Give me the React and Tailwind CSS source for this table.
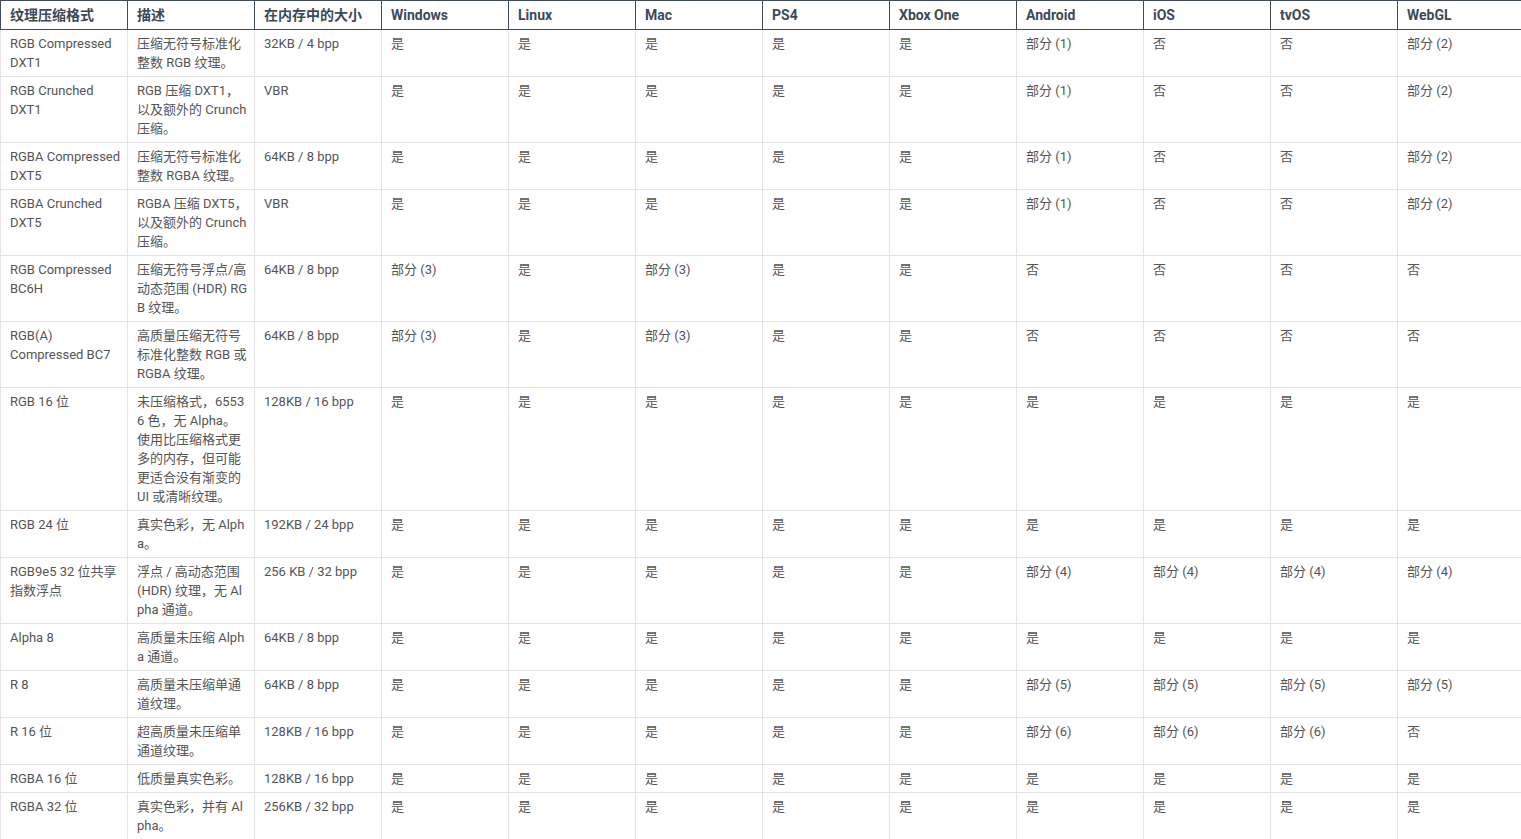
const headers = ['纹理压缩格式', '描述', '在内存中的大小', 'Windows', 'Linux', 'Mac', 'PS4', 'Xbox One', 'Android', 'iOS', 'tvOS', 'WebGL']

const Y = '是'
const N = '否'

const rows = [
  { name: 'RGB Compressed DXT1', desc: ['压缩无符号标准化', '整数 RGB 纹理。'], size: '32KB / 4 bpp', vals: [Y, Y, Y, Y, Y, '部分 (1)', N, N, '部分 (2)'] },
  { name: 'RGB Crunched DXT1', desc: ['RGB 压缩 DXT1，', '以及额外的 Crunch', '压缩。'], size: 'VBR', vals: [Y, Y, Y, Y, Y, '部分 (1)', N, N, '部分 (2)'] },
  { name: 'RGBA Compressed DXT5', desc: ['压缩无符号标准化', '整数 RGBA 纹理。'], size: '64KB / 8 bpp', vals: [Y, Y, Y, Y, Y, '部分 (1)', N, N, '部分 (2)'] },
  { name: 'RGBA Crunched DXT5', desc: ['RGBA 压缩 DXT5，', '以及额外的 Crunch', '压缩。'], size: 'VBR', vals: [Y, Y, Y, Y, Y, '部分 (1)', N, N, '部分 (2)'] },
  { name: 'RGB Compressed BC6H', desc: ['压缩无符号浮点/高', '动态范围 (HDR) RG', 'B 纹理。'], size: '64KB / 8 bpp', vals: ['部分 (3)', Y, '部分 (3)', Y, Y, N, N, N, N] },
  { name: 'RGB(A) Compressed BC7', desc: ['高质量压缩无符号', '标准化整数 RGB 或', 'RGBA 纹理。'], size: '64KB / 8 bpp', vals: ['部分 (3)', Y, '部分 (3)', Y, Y, N, N, N, N] },
  { name: 'RGB 16 位', desc: ['未压缩格式，6553', '6 色，无 Alpha。', '使用比压缩格式更', '多的内存，但可能', '更适合没有渐变的', 'UI 或清晰纹理。'], size: '128KB / 16 bpp', vals: [Y, Y, Y, Y, Y, Y, Y, Y, Y] },
  { name: 'RGB 24 位', desc: ['真实色彩，无 Alph', 'a。'], size: '192KB / 24 bpp', vals: [Y, Y, Y, Y, Y, Y, Y, Y, Y] },
  { name: 'RGB9e5 32 位共享指数浮点', desc: ['浮点 / 高动态范围', '(HDR) 纹理，无 Al', 'pha 通道。'], size: '256 KB / 32 bpp', vals: [Y, Y, Y, Y, Y, '部分 (4)', '部分 (4)', '部分 (4)', '部分 (4)'] },
  { name: 'Alpha 8', desc: ['高质量未压缩 Alph', 'a 通道。'], size: '64KB / 8 bpp', vals: [Y, Y, Y, Y, Y, Y, Y, Y, Y] },
  { name: 'R 8', desc: ['高质量未压缩单通', '道纹理。'], size: '64KB / 8 bpp', vals: [Y, Y, Y, Y, Y, '部分 (5)', '部分 (5)', '部分 (5)', '部分 (5)'] },
  { name: 'R 16 位', desc: ['超高质量未压缩单', '通道纹理。'], size: '128KB / 16 bpp', vals: [Y, Y, Y, Y, Y, '部分 (6)', '部分 (6)', '部分 (6)', N] },
  { name: 'RGBA 16 位', desc: ['低质量真实色彩。'], size: '128KB / 16 bpp', vals: [Y, Y, Y, Y, Y, Y, Y, Y, Y] },
  { name: 'RGBA 32 位', desc: ['真实色彩，并有 Al', 'pha。'], size: '256KB / 32 bpp', vals: [Y, Y, Y, Y, Y, Y, Y, Y, Y] },
]

const font = { fontFamily: 'Roboto, "Noto Sans CJK SC", sans-serif' }

export default function App() {
  return (
    <div className="h-[839px] w-[1521px] overflow-hidden bg-white" style={font}>
      <table className="table-fixed border-separate border-spacing-0 w-[1524px]">
        <colgroup>
          {headers.map((h) => <col key={h} className="w-[127px]" />)}
        </colgroup>
        <thead>
          <tr>
            {headers.map((h) => (
              <th
                key={h}
                className="border-t border-b border-l border-[#3f4b57] pl-[9px] pr-[7px] py-1 text-left align-top text-[14px] leading-[20px] font-bold text-[#3c4a57]"
              >
                {h}
              </th>
            ))}
          </tr>
        </thead>
        <tbody>
          {rows.map((r) => (
            <tr key={r.name}>
              <td className="border-l border-b border-[#e4e4e4] pl-[9px] pr-[3px] py-1 align-top text-[13px] leading-[19px] text-[#555]">
                {r.name}
              </td>
              <td className="border-l border-b border-[#e4e4e4] pl-[9px] pr-[7px] py-1 align-top text-[13px] leading-[19px] text-[#555]">
                {r.desc.map((line, i) => (
                  <div key={i} className="whitespace-nowrap">{line}</div>
                ))}
              </td>
              <td className="border-l border-b border-[#e4e4e4] pl-[9px] pr-[7px] py-1 align-top text-[13px] leading-[19px] text-[#555]">
                {r.size}
              </td>
              {r.vals.map((v, i) => (
                <td key={i} className="border-l border-b border-[#e4e4e4] pl-[9px] pr-[7px] py-1 align-top text-[13px] leading-[19px] text-[#555]">
                  {v}
                </td>
              ))}
            </tr>
          ))}
        </tbody>
      </table>
    </div>
  )
}
